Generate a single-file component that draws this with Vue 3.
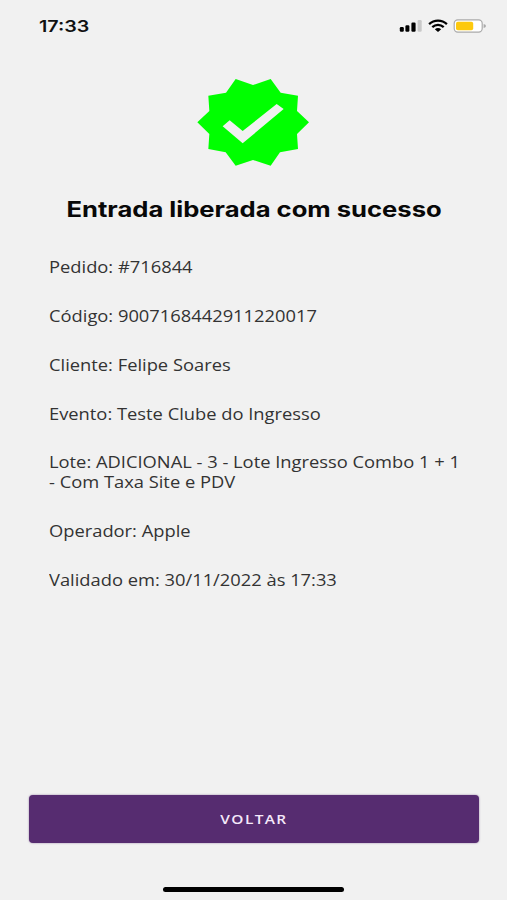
<template>
  <main class="screen">
    <header class="status-bar">
      <span class="time">17:33</span>
      <svg class="status-icons" width="88" height="16" viewBox="0 0 88 16">
        <rect x="0.8" y="9" width="4" height="4.7" rx="1.2" />
        <rect x="6.4" y="7.2" width="4" height="6.5" rx="1.2" />
        <rect x="12.4" y="4.5" width="4.2" height="9.2" rx="1.2" />
        <rect x="18.6" y="2" width="4.1" height="11.7" rx="1.2" fill="#c9c9c9" />
        <g fill="none" stroke="#000" stroke-width="2.3">
          <path d="M30.1 6.2C35.2 1.5 42.8 1.5 47.9 6.2" />
          <path d="M33.3 9.2C36.6 6.2 41.4 6.2 44.7 9.2" />
        </g>
        <path d="M35.8 11.3Q39 8.9 42.2 11.3L39 14Z" />
        <rect x="55.2" y="1.9" width="28" height="12.2" rx="3.6" fill="#fff" stroke="#aaa" stroke-width="1.2" />
        <rect x="57" y="3.7" width="17.2" height="8.6" rx="1.8" fill="#fdc90e" />
        <path d="M84.6 6Q87 6.3 87 8T84.6 10Z" fill="#aaa" />
      </svg>
    </header>

    <svg class="badge" width="112" height="88" viewBox="0 0 336 264">
      <path
        fill="#0f0"
        d="M116 3L168 21L221 3L251 44L303 53L300 99L336 133L300 168L303 213L249 223L221 263L168 246L116 263L86 223L34 213L37 168L1 133L37 99L34 53L87 44Z"
      />
      <path fill="#f1f1f1" d="M98 127L137 159L239 78L260 93L137 196L77 145Z" />
    </svg>

    <h1 class="title"><span>Entrada liberada com sucesso</span></h1>

    <section class="details">
      <p v-for="item in details" :key="item.label">
        {{ item.label }}: {{ item.value }}
      </p>
    </section>

    <button class="back-button" type="button"><span>VOLTAR</span></button>
    <div class="home-indicator"></div>
  </main>
</template>

<script setup>
const details = [
  { label: "Pedido", value: "#716844" },
  { label: "Código", value: "9007168442911220017" },
  { label: "Cliente", value: "Felipe Soares" },
  { label: "Evento", value: "Teste Clube do Ingresso" },
  { label: "Lote", value: "ADICIONAL - 3 - Lote Ingresso Combo 1 + 1 - Com Taxa Site e PDV" },
  { label: "Operador", value: "Apple" },
  { label: "Validado em", value: "30/11/2022 às 17:33" },
];
</script>

<style>
body {
  margin: 0;
  background: #f1f1f1;
}
</style>

<style scoped>
.screen {
  display: flex;
  flex-direction: column;
  align-items: center;
  box-sizing: border-box;
  width: 507px;
  height: 900px;
  padding-bottom: 8px;
  background: #f1f1f1;
  overflow: hidden;
}

.status-bar {
  display: flex;
  align-items: center;
  justify-content: space-between;
  box-sizing: border-box;
  width: 100%;
  height: 52px;
  padding: 0 20px 0 39px;
}

.time {
  font: 600 16px/20px Inter, sans-serif;
  color: #111;
  transform: scaleX(1.23);
  transform-origin: left;
}

.badge {
  margin: 26px 0 0 -1px;
}

.title {
  margin: 29px 0 0 1px;
  font: 700 21.3px/28px Inter, sans-serif;
  color: #080808;
  white-space: nowrap;
}

.title span {
  display: inline-block;
  transform: scaleX(1.202);
}

.details {
  align-self: flex-start;
  width: 350px;
  margin: 35.2px 0 0 48.5px;
  font: 400 15.4px/20px "Open Sans", sans-serif;
  color: #333;
  transform: scaleX(1.19);
  transform-origin: left;
}

.details p {
  margin: 0 0 28.8px;
}

.back-button {
  width: 450px;
  height: 48px;
  margin-top: auto;
  padding: 0;
  border: 0;
  border-radius: 4px;
  background: #562c70;
  box-shadow: 0 0 2px rgba(86, 44, 112, 0.6);
  color: #f5e9fa;
  font: 600 13.3px/20px "Open Sans", sans-serif;
  letter-spacing: 1.2px;
}

.back-button span {
  display: inline-block;
  transform: scaleX(1.16);
}

.home-indicator {
  width: 181px;
  height: 5px;
  margin-top: 44px;
  border-radius: 3px;
  background: #000;
}
</style>
